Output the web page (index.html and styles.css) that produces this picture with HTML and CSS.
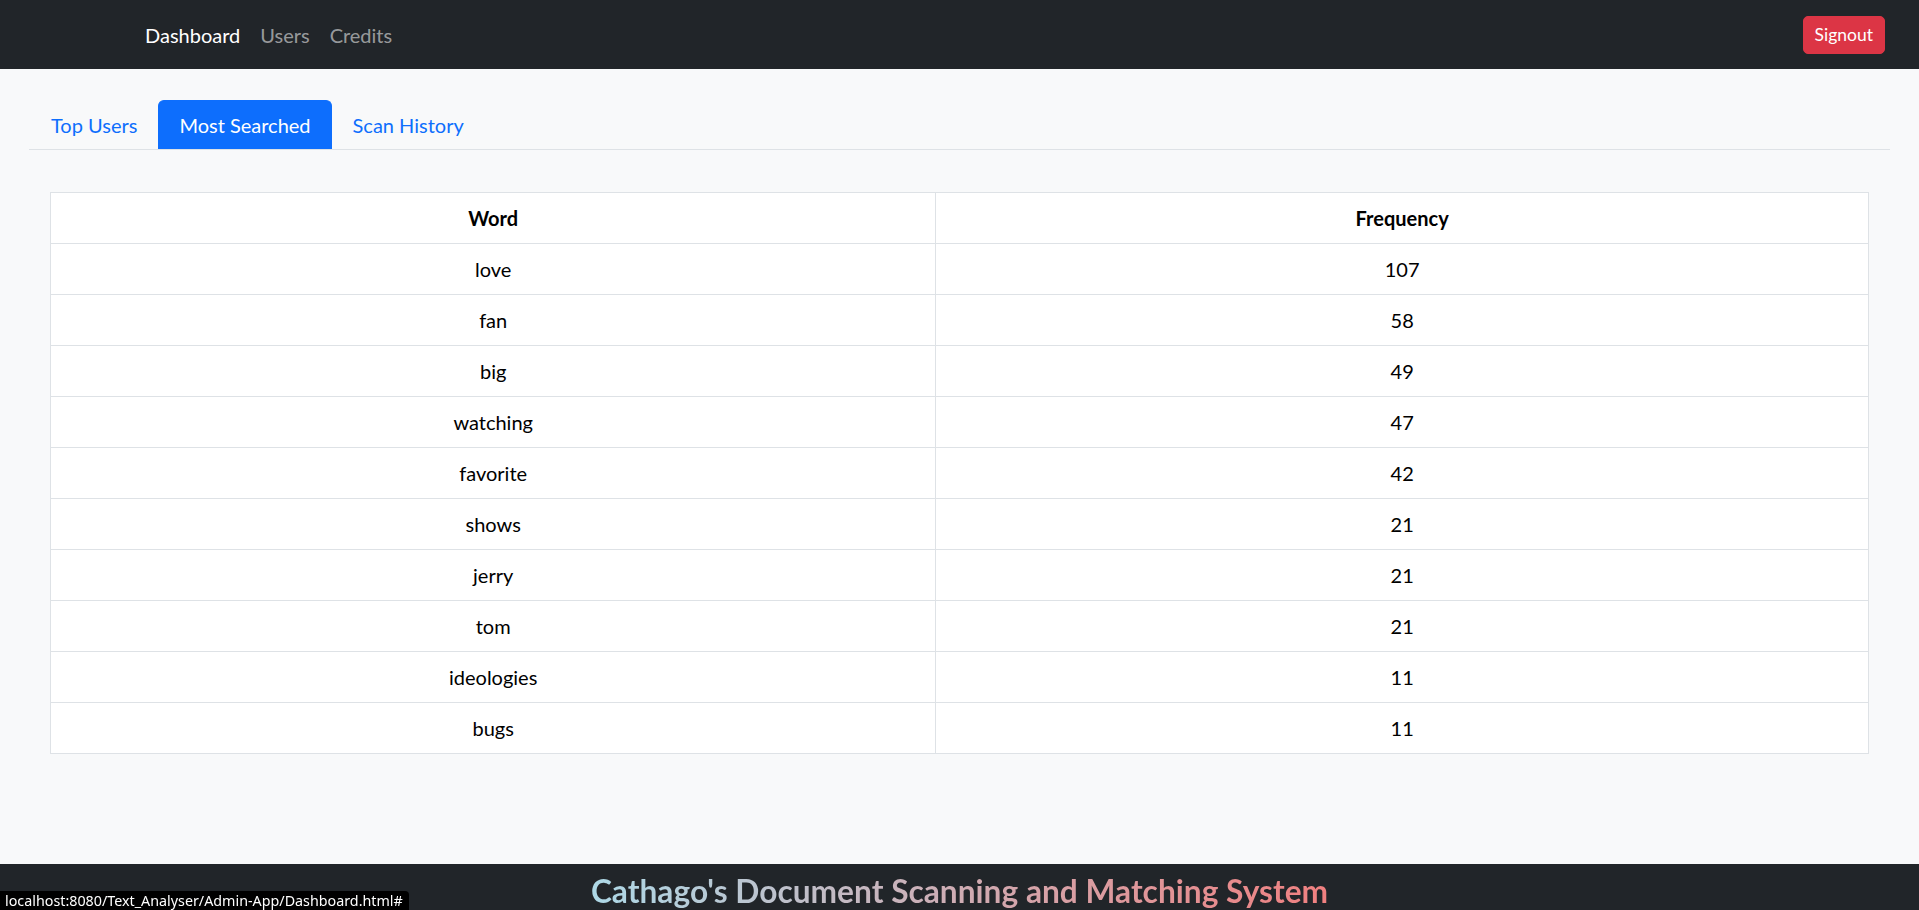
FILE: index.html
```html
<!DOCTYPE html>
<html lang="en">
<head>
<meta charset="utf-8">
<title>Dashboard</title>
<link rel="stylesheet" href="styles.css">
</head>
<body>
<div class="page">
  <nav class="navbar">
    <ul class="nav-links">
      <li><a class="nav-link active" href="#">Dashboard</a></li>
      <li><a class="nav-link" href="#">Users</a></li>
      <li><a class="nav-link" href="#">Credits</a></li>
    </ul>
    <button class="btn-signout" type="button">Signout</button>
  </nav>

  <main class="main">
    <ul class="tabs">
      <li><a class="tab" href="#">Top Users</a></li>
      <li><a class="tab active" href="#">Most Searched</a></li>
      <li><a class="tab" href="#">Scan History</a></li>
    </ul>

    <div class="table-wrap">
      <table class="data-table">
        <thead>
          <tr><th class="col-word">Word</th><th>Frequency</th></tr>
        </thead>
        <tbody>
          <tr><td>love</td><td>107</td></tr>
          <tr><td>fan</td><td>58</td></tr>
          <tr><td>big</td><td>49</td></tr>
          <tr><td>watching</td><td>47</td></tr>
          <tr><td>favorite</td><td>42</td></tr>
          <tr><td>shows</td><td>21</td></tr>
          <tr><td>jerry</td><td>21</td></tr>
          <tr><td>tom</td><td>21</td></tr>
          <tr><td>ideologies</td><td>11</td></tr>
          <tr><td>bugs</td><td>11</td></tr>
        </tbody>
      </table>
    </div>
  </main>

  <footer class="footer">
    <h2 class="footer-title">Cathago's Document Scanning and Matching System</h2>
  </footer>
</div>
<div class="status-bubble">localhost:8080/Text_Analyser/Admin-App/Dashboard.html#</div>
</body>
</html>
```

FILE: styles.css
```css
* { box-sizing: border-box; }

html, body {
  margin: 0;
  padding: 0;
  height: 100%;
  overflow: hidden;
}

body {
  font-family: Lato, "Noto Sans", "Liberation Sans", sans-serif;
  font-size: 20px;
  line-height: 1.5;
  color: #212529;
  background: #f8f9fa;
}

.page {
  display: flex;
  flex-direction: column;
  min-height: 100%;
}

/* Navbar */
.navbar {
  height: 69px;
  background: #212529;
  display: flex;
  align-items: center;
  justify-content: space-between;
  padding: 0 34px 0 135px;
}

.nav-links {
  list-style: none;
  margin: 0;
  padding: 0;
  display: flex;
}

.nav-link {
  display: block;
  padding: 10px 10px;
  line-height: 30px;
  font-size: 20px;
  text-decoration: none;
  color: rgba(255, 255, 255, 0.55);
}

.nav-link.active { color: #fff; }

.btn-signout {
  font-family: inherit;
  font-size: 17.5px;
  line-height: 26px;
  padding: 5px 11px;
  height: 38px;
  color: #fff;
  background: #dc3545;
  border: 1px solid #dc3545;
  border-radius: 5px;
  cursor: pointer;
}

/* Main */
.main {
  height: 795px;
  padding: 31px 29px 0 29px;
  flex: none;
}

.tabs {
  list-style: none;
  margin: 0;
  padding: 0 0 0 1px;
  display: flex;
  border-bottom: 1px solid #dee2e6;
}

.tab {
  display: block;
  padding: 9px 20px 9px;
  line-height: 30px;
  font-size: 20px;
  color: #0d6efd;
  text-decoration: none;
  border: 1px solid transparent;
  border-bottom: 0;
  border-radius: 6px 6px 0 0;
}

.tab.active {
  background: #0d6efd;
  border-color: #0d6efd;
  color: #fff;
}

.table-wrap {
  padding: 42px 21px 0 21px;
}

.data-table {
  width: 100%;
  border-collapse: collapse;
  background: #fff;
  color: #000;
  text-align: center;
}

.data-table th,
.data-table td {
  border: 1px solid #dee2e6;
  padding: 10px;
  height: 51px;
  line-height: 30px;
  font-size: 20px;
}

.data-table th { font-weight: 700; }

.col-word { width: 48.7%; }

/* Footer */
.footer {
  background: #212529;
  height: 80px;
  padding-top: 8px;
  text-align: center;
  flex: none;
}

.footer-title {
  display: inline-block;
  margin: 0;
  font-size: 31.7px;
  line-height: 38px;
  font-weight: 700;
  background: linear-gradient(90deg, #add8e6, #f08080);
  -webkit-background-clip: text;
  background-clip: text;
  color: transparent;
}

/* Browser status bubble */
.status-bubble {
  position: fixed;
  left: 0;
  bottom: 0;
  height: 19px;
  padding: 0 6px 0 5px;
  background: #000;
  color: #fff;
  font-family: "Noto Sans", "Liberation Sans", sans-serif;
  font-size: 14.3px;
  line-height: 20px;
  border-top-right-radius: 4px;
  white-space: nowrap;
  overflow: hidden;
}
```
